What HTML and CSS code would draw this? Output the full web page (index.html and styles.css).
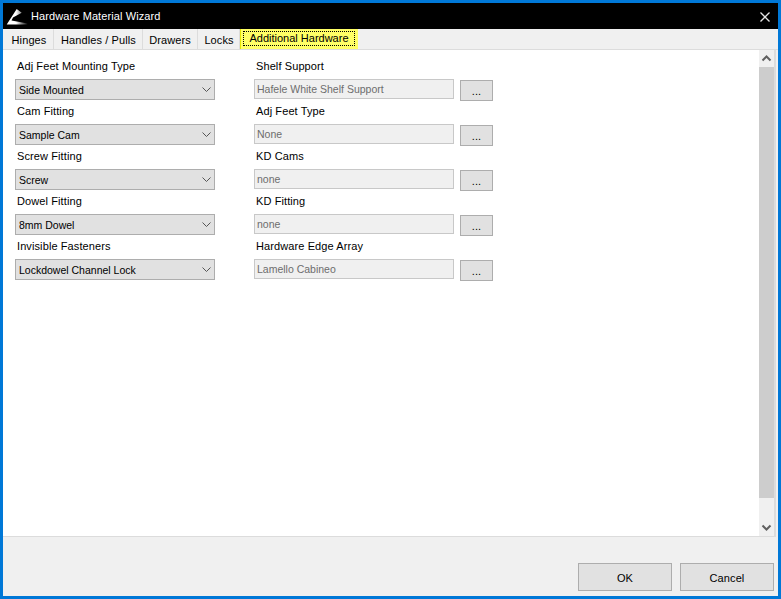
FILE: index.html
```html
<!DOCTYPE html>
<html lang="en">
<head>
<meta charset="utf-8">
<title>Hardware Material Wizard</title>
<link rel="stylesheet" href="styles.css">
</head>
<body>
<div class="window">
  <header class="titlebar">
    <svg class="logo" width="22" height="18" viewBox="0 0 22 18"><defs><linearGradient id="fade" gradientUnits="userSpaceOnUse" x1="10" y1="0" x2="22" y2="0"><stop offset="0" stop-color="#fff"/><stop offset="1" stop-color="#000"/></linearGradient></defs><path d="M0.7 16.5 L10.7 1 L15.7 4.7 L7 9.5 L5.5 12.5 L21.5 15.5 L21.5 16.5 Z" fill="url(#fade)"/></svg>
    <span class="title">Hardware Material Wizard</span>
    <svg class="close" width="10" height="10" viewBox="0 0 10 10"><path d="M0.5 0.5 L9.5 9.5 M9.5 0.5 L0.5 9.5" stroke="#e6e6e6" stroke-width="1.3" fill="none"/></svg>
  </header>
  <nav class="tabs">
    <span class="tab tab-hinges">Hinges</span>
    <span class="tab tab-handles">Handles / Pulls</span>
    <span class="tab tab-drawers">Drawers</span>
    <span class="tab tab-locks">Locks</span>
    <span class="tab-active"><span class="tab-focus">Additional Hardware</span></span>
  </nav>
  <main class="panel">
    <div class="form">
      <div class="column column-left">
        <div class="field"><label>Adj Feet Mounting Type</label><div class="select"><span>Side Mounted</span><svg class="chev" width="9" height="5" viewBox="0 0 9 5"><path d="M0.5 0.5 L4.5 4.5 L8.5 0.5" stroke="#555" fill="none"/></svg></div></div>
        <div class="field"><label>Cam Fitting</label><div class="select"><span>Sample Cam</span><svg class="chev" width="9" height="5" viewBox="0 0 9 5"><path d="M0.5 0.5 L4.5 4.5 L8.5 0.5" stroke="#555" fill="none"/></svg></div></div>
        <div class="field"><label>Screw Fitting</label><div class="select"><span>Screw</span><svg class="chev" width="9" height="5" viewBox="0 0 9 5"><path d="M0.5 0.5 L4.5 4.5 L8.5 0.5" stroke="#555" fill="none"/></svg></div></div>
        <div class="field"><label>Dowel Fitting</label><div class="select"><span>8mm Dowel</span><svg class="chev" width="9" height="5" viewBox="0 0 9 5"><path d="M0.5 0.5 L4.5 4.5 L8.5 0.5" stroke="#555" fill="none"/></svg></div></div>
        <div class="field"><label>Invisible Fasteners</label><div class="select"><span>Lockdowel Channel Lock</span><svg class="chev" width="9" height="5" viewBox="0 0 9 5"><path d="M0.5 0.5 L4.5 4.5 L8.5 0.5" stroke="#555" fill="none"/></svg></div></div>
      </div>
      <div class="column column-right">
        <div class="field"><label>Shelf Support</label><div class="picker"><div class="input">Hafele White Shelf Support</div><div class="dots">...</div></div></div>
        <div class="field"><label>Adj Feet Type</label><div class="picker"><div class="input">None</div><div class="dots">...</div></div></div>
        <div class="field"><label>KD Cams</label><div class="picker"><div class="input">none</div><div class="dots">...</div></div></div>
        <div class="field"><label>KD Fitting</label><div class="picker"><div class="input">none</div><div class="dots">...</div></div></div>
        <div class="field"><label>Hardware Edge Array</label><div class="picker"><div class="input">Lamello Cabineo</div><div class="dots">...</div></div></div>
      </div>
    </div>
    <div class="scrollbar">
      <svg class="arrow" width="15" height="17" viewBox="0 0 15 17"><path d="M3.5 10.5 L7.5 6.5 L11.5 10.5" stroke="#606060" stroke-width="2" fill="none"/></svg>
      <div class="thumb"></div>
      <svg class="arrow" width="15" height="17" viewBox="0 0 15 17"><path d="M3.5 6.5 L7.5 10.5 L11.5 6.5" stroke="#606060" stroke-width="2" fill="none"/></svg>
    </div>
  </main>
  <footer class="footer">
    <div class="btn btn-ok">OK</div>
    <div class="btn btn-cancel">Cancel</div>
  </footer>
</div>
</body>
</html>
```
FILE: styles.css
```css
html, body {
  margin: 0;
  padding: 0;
  background: #0078d7;
}
body {
  font-family: "Liberation Sans", Arial, sans-serif;
  font-size: 11px;
  letter-spacing: 0.1px;
  color: #000;
}
.window {
  box-sizing: border-box;
  width: 781px;
  height: 599px;
  border: 3px solid #0078d7;
  display: flex;
  flex-direction: column;
  background: #f0f0f0;
  overflow: hidden;
}
.titlebar {
  height: 26px;
  flex: none;
  background: #000;
  color: #fff;
  display: flex;
  align-items: center;
  padding-left: 3px;
  padding-right: 8px;
}
.logo { flex: none; margin-top: 2px; }
.title { margin-left: 3px; }
.close { margin-left: auto; margin-top: 2px; }
.tabs {
  height: 20px;
  flex: none;
  display: flex;
  align-items: stretch;
  background: #f0f0f0;
  border-bottom: 1px solid #dcdcdc;
}
.tab {
  display: flex;
  align-items: center;
  justify-content: center;
  box-sizing: border-box;
  border-right: 1px solid #dcdcdc;
  padding-top: 2px;
}
.tab-hinges { width: 51px; padding-left: 2px; }
.tab-handles { width: 89px; padding-left: 1px; }
.tab-drawers { width: 55px; }
.tab-locks { width: 42px; padding-left: 1px; }
.tab-active {
  width: 118px;
  box-sizing: border-box;
  background: #ffff66;
  padding: 2px;
  border-left: 1px solid #e6e600;
  height: 20px;
}
.tab-focus {
  display: block;
  box-sizing: border-box;
  height: 15px;
  line-height: 13px;
  text-align: center;
  letter-spacing: 0;
  border: 1px dotted #000;
  width: 112px;
}
.panel {
  flex: none;
  height: 486px;
  margin-right: 2px;
  background: #fff;
  display: flex;
  border-bottom: 1px solid #dcdcdc;
  border-right: 2px solid #dcdcdc;
}
.form {
  flex: 1;
  display: flex;
  padding-top: 9px;
  padding-left: 12px;
}
.column { width: 200px; }
.column-left { margin-right: 39px; }
.field {
  height: 45px;
  box-sizing: border-box;
}
.field label {
  display: block;
  height: 20px;
  line-height: 14px;
  padding-left: 2px;
}
.column-right { width: 239px; }
.select {
  box-sizing: border-box;
  width: 200px;
  height: 21px;
  background: #e1e1e1;
  border: 1px solid #adadad;
  display: flex;
  align-items: center;
  justify-content: space-between;
  padding: 0 3px 0 3px;
  font-size: 10.5px;
  letter-spacing: 0;
}
.picker {
  display: flex;
  align-items: flex-start;
  gap: 6px;
}
.input {
  box-sizing: border-box;
  width: 200px;
  height: 20px;
  line-height: 19px;
  background: #f0f0f0;
  border: 1px solid #c8c8c8;
  padding-left: 2px;
  color: #6d6d6d;
  font-size: 10.5px;
  letter-spacing: 0;
}
.dots {
  box-sizing: border-box;
  width: 33px;
  height: 21px;
  margin-top: 1px;
  background: #e1e1e1;
  border: 1px solid #adadad;
  text-align: center;
  line-height: 20px;
}
.scrollbar {
  flex: none;
  width: 15px;
  background: #f0f0f0;
  display: flex;
  flex-direction: column;
}
.arrow { flex: none; }
.thumb {
  flex: 1;
  margin-bottom: 21px;
  background: #cdcdcd;
}
.footer {
  flex: 1;
  display: flex;
  justify-content: flex-end;
  align-items: flex-end;
  gap: 8px;
  padding: 0 4px 5px 0;
}
.btn {
  box-sizing: border-box;
  height: 28px;
  padding-top: 2px;
  background: #e1e1e1;
  border: 1px solid #adadad;
  display: flex;
  align-items: center;
  justify-content: center;
}
.btn-ok { width: 94px; }
.btn-cancel { width: 94px; }
```
